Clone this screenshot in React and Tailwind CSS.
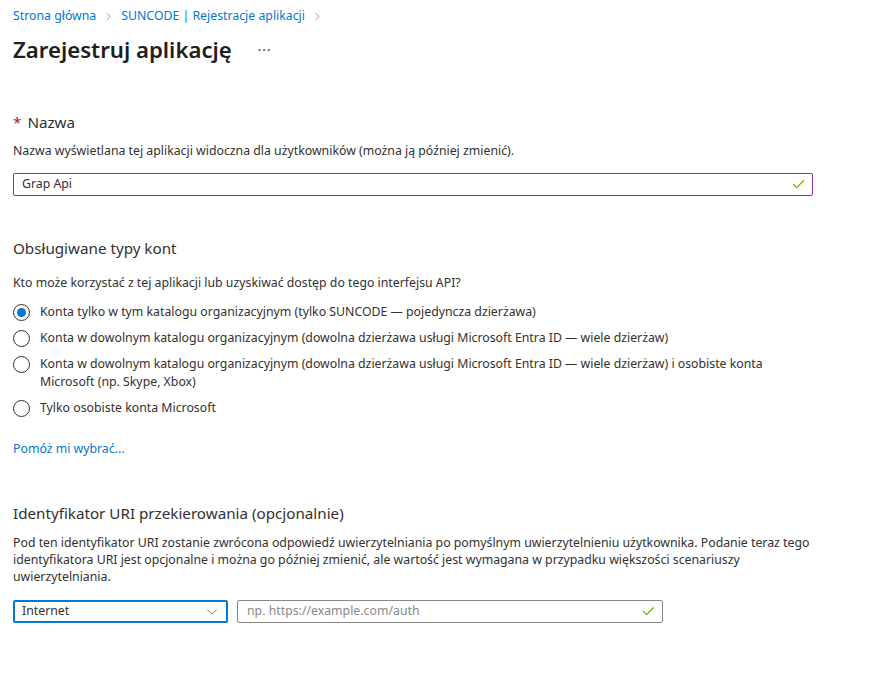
import React from 'react';
import { ChevronRight, ChevronDown, Check, MoreHorizontal } from 'lucide-react';

const font = { fontFamily: '"Noto Sans", "Open Sans", sans-serif' };

const accounts = [
    { label: 'Konta tylko w tym katalogu organizacyjnym (tylko SUNCODE — pojedyncza dzierżawa)', checked: true },
    { label: 'Konta w dowolnym katalogu organizacyjnym (dowolna dzierżawa usługi Microsoft Entra ID — wiele dzierżaw)' },
    { label: 'Konta w dowolnym katalogu organizacyjnym (dowolna dzierżawa usługi Microsoft Entra ID — wiele dzierżaw) i osobiste konta Microsoft (np. Skype, Xbox)' },
    { label: 'Tylko osobiste konta Microsoft' },
];

const Radio = ({ checked, label }) => (
    <label className="flex items-start gap-[10px]">
        <span className="mt-[1px] w-[17px] h-[17px] rounded-full border border-[#323130] flex items-center justify-center shrink-0">
            {checked && <span className="w-[9px] h-[9px] rounded-full bg-[#0078d4]" />}
        </span>
        <span className="leading-[18px] pr-[90px]">{label}</span>
    </label>
);

export default function App() {
    return (
        <div className="w-[894px] h-[694px] bg-white text-[#323130] text-[12.3px] px-[13px] pt-[7px]" style={font}>
            {/* Breadcrumb */}
            <nav className="flex items-center gap-[6px] text-[#0078d4] leading-[18px]">
                <span>Strona główna</span>
                <ChevronRight size={13} className="text-[#8a8886]" strokeWidth={1.5} />
                <span>SUNCODE | Rejestracje aplikacji</span>
                <ChevronRight size={13} className="text-[#8a8886]" strokeWidth={1.5} />
            </nav>

            <div className="flex items-center mt-[9px] h-[32px]">
                <h1 className="text-[22.2px] font-semibold text-[#201f1e]">Zarejestruj aplikację</h1>
                <MoreHorizontal size={16} className="ml-[24px] text-[#605e5c]" strokeWidth={1.5} />
            </div>

            {/* Name */}
            <section className="mt-[45px]">
                <h2 className="text-[15.2px] leading-[22px]">
                    <span className="text-[#a4262c] mr-[6px]">*</span>Nazwa
                </h2>
                <p className="mt-[9px] leading-[18px]">Nazwa wyświetlana tej aplikacji widoczna dla użytkowników (można ją później zmienić).</p>
                <div className="mt-[13px] w-[800px] h-[23px] border border-[#8a2da5] rounded-[2px] flex items-center pl-[8px] pr-[6px]">
                    <span className="flex-1">Grap Api</span>
                    <Check size={15} className="text-[#6bb700]" strokeWidth={2} />
                </div>
            </section>

            {/* Account types */}
            <section className="mt-[41px]">
                <h2 className="text-[15.2px] leading-[22px]">Obsługiwane typy kont</h2>
                <p className="mt-[15px] leading-[18px]">Kto może korzystać z tej aplikacji lub uzyskiwać dostęp do tego interfejsu API?</p>
                <div className="mt-[11px] flex flex-col gap-[8px]">
                    {accounts.map((a, i) => (
                        <Radio key={i} {...a} />
                    ))}
                </div>
                <a className="block mt-[23px] text-[#0078d4] leading-[18px]">Pomóż mi wybrać...</a>
            </section>

            {/* Redirect URI */}
            <section className="mt-[44px]">
                <h2 className="text-[15.2px] leading-[22px]">Identyfikator URI przekierowania (opcjonalnie)</h2>
                <p className="mt-[10px] leading-[17px] w-[800px]">
                    Pod ten identyfikator URI zostanie zwrócona odpowiedź uwierzytelniania po pomyślnym uwierzytelnieniu użytkownika. Podanie teraz tego identyfikatora URI jest opcjonalne i można go później zmienić, ale wartość jest wymagana w przypadku większości scenariuszy uwierzytelniania.
                </p>
                <div className="mt-[15px] flex gap-[9px]">
                    <div className="w-[215px] h-[23px] border-2 border-[#0078d4] rounded-[2px] flex items-center pl-[7px] pr-[5px]">
                        <span className="flex-1">Internet</span>
                        <ChevronDown size={18} className="text-[#605e5c]" strokeWidth={1.1} />
                    </div>
                    <div className="w-[426px] h-[23px] border border-[#8a8886] rounded-[2px] flex items-center pl-[9px] pr-[6px]">
                        <span className="flex-1 text-[#8a8886]">np. https://example.com/auth</span>
                        <Check size={15} className="text-[#6bb700]" strokeWidth={2} />
                    </div>
                </div>
            </section>
        </div>
    );
}
